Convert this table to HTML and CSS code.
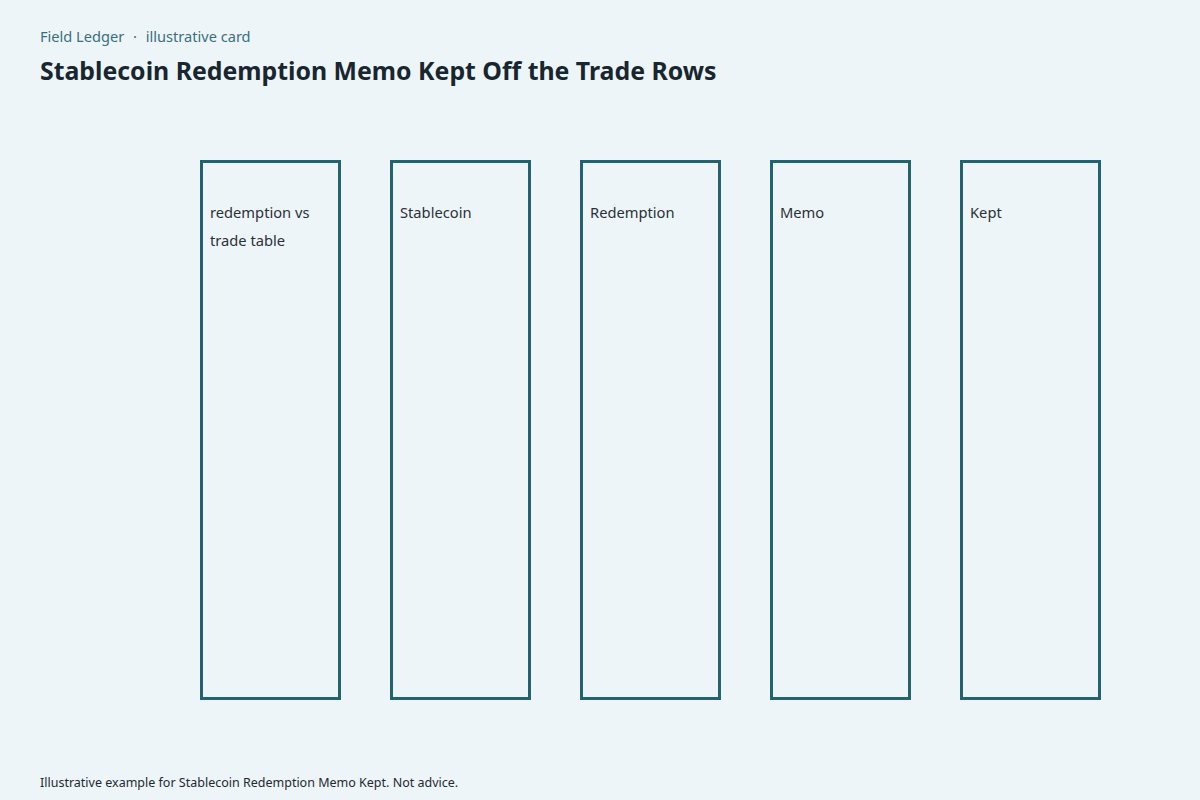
FILE: index.html
```html
<!DOCTYPE html>
<html lang="en">
<head>
<meta charset="utf-8">
<title>Stablecoin Redemption Memo Kept Off the Trade Rows</title>
<link rel="stylesheet" href="styles.css">
</head>
<body>
<div class="page">
  <header class="head">
    <div class="kicker">Field Ledger <span class="dot">·</span> illustrative card</div>
    <h1 class="title">Stablecoin Redemption Memo Kept Off the Trade Rows</h1>
  </header>
  <main class="cols">
    <div class="col"><span class="label">redemption vs trade table</span></div>
    <div class="col"><span class="label">Stablecoin</span></div>
    <div class="col"><span class="label">Redemption</span></div>
    <div class="col"><span class="label">Memo</span></div>
    <div class="col"><span class="label">Kept</span></div>
  </main>
  <footer class="foot">Illustrative example for Stablecoin Redemption Memo Kept. Not advice.</footer>
</div>
</body>
</html>
```
FILE: styles.css
```css
* { box-sizing: border-box; }
html, body { margin: 0; padding: 0; }
body {
  background: #eef5f9;
  font-family: "Noto Sans", "Open Sans", sans-serif;
  color: #1a2a33;
}
.page {
  width: 1200px;
  height: 800px;
  padding: 0 40px;
  display: flex;
  flex-direction: column;
}
.head { padding-top: 26px; }
.kicker {
  font-size: 14.6px;
  line-height: 20px;
  color: #3a6f80;
}
.dot { margin: 0 5px; }
.title {
  margin: 9px 0 0;
  font-size: 24.85px;
  line-height: 30px;
  font-weight: 700;
  color: #17262f;
}
.cols {
  margin-top: 75px;
  padding-left: 160px;
  display: flex;
  gap: 49px;
}
.col {
  width: 141px;
  height: 540px;
  border: 3px solid #23636f;
  padding: 35px 7px 0;
}
.label {
  display: block;
  font-size: 14.7px;
  line-height: 28px;
  color: #2a3136;
}
.foot {
  margin-top: auto;
  padding-bottom: 7px;
  font-size: 12.5px;
  line-height: 20px;
  color: #222a30;
}
```
